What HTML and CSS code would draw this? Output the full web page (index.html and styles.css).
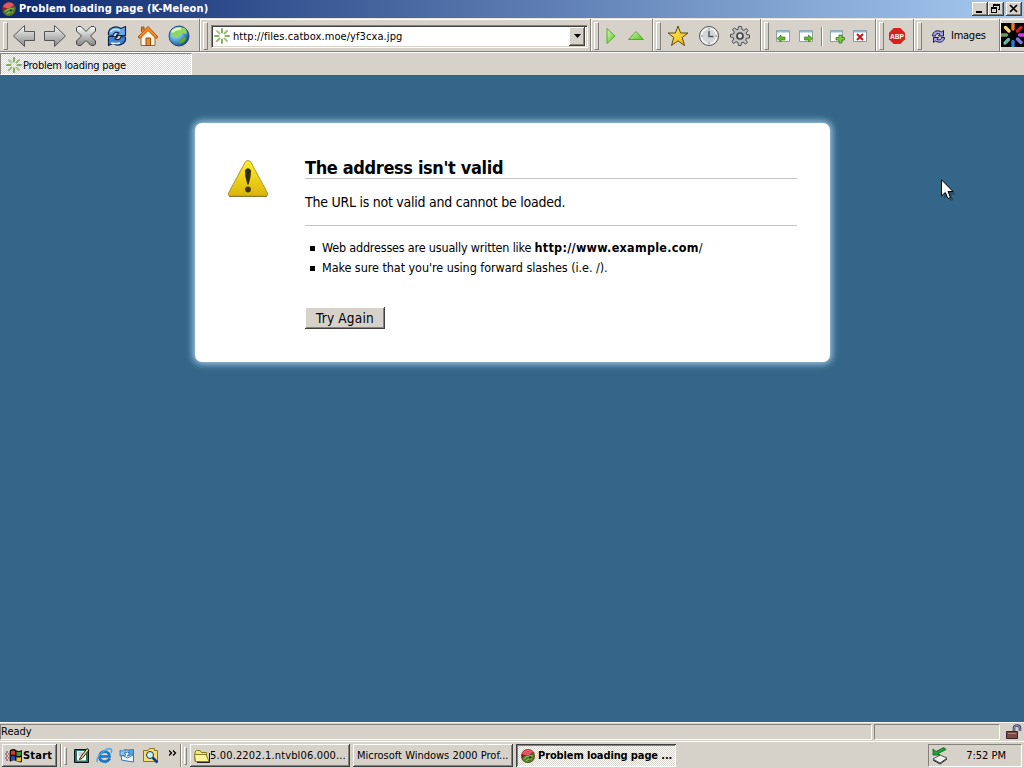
FILE: index.html
```html
<!DOCTYPE html>
<html lang="en">
<head>
    <meta charset="UTF-8">
    <title>Problem loading page</title>
    <link rel="stylesheet" href="styles.css">
</head>
<body>

    <!-- shared icons -->
    <svg class="defs" width="0" height="0">
        <defs>
            <linearGradient id="silver" x1="0" y1="0" x2="0" y2="1"><stop offset="0" stop-color="#fafafa"/><stop offset="1" stop-color="#858585"/></linearGradient>
            <linearGradient id="gold" x1="0" y1="0" x2="1" y2="1"><stop offset="0" stop-color="#fff36a"/><stop offset="1" stop-color="#f0b400"/></linearGradient>
            <linearGradient id="lime" x1="0" y1="0" x2="1" y2="1"><stop offset="0" stop-color="#d8fab4"/><stop offset="1" stop-color="#52c41c"/></linearGradient>
            <linearGradient id="warn" x1="0" y1="0" x2="0" y2="1"><stop offset="0" stop-color="#ffef28"/><stop offset="1" stop-color="#dcb40c"/></linearGradient>
            <radialGradient id="ocean" cx=".35" cy=".35" r=".75"><stop offset="0" stop-color="#c4ecff"/><stop offset=".55" stop-color="#4c9ad0"/><stop offset="1" stop-color="#123c70"/></radialGradient>
        </defs>
        <symbol id="kmeleon" viewBox="0 0 16 16">
            <circle cx="8" cy="8" r="7" fill="#8a2424"/>
            <path d="M2 6C3 1 11 0 13 4L8 8Z" fill="#e05862"/>
            <path d="M2 11C4 6 9 8 14 5C16 10 12 15 8 15C5 15 3 13 2 11Z" fill="#4c7a28"/>
            <path d="M4 11Q7 7 13 8M6 13Q9 10 12 11" stroke="#8fbd58" stroke-width="1.1" fill="none"/>
            <circle cx="10" cy="9.500" r="1" fill="#222"/>
        </symbol>
        <symbol id="spokes" viewBox="0 0 16 16">
            <g stroke-width="2" stroke-linecap="round">
                <path d="M8 1V4.500M8 11.500V15" stroke="#86ae62"/>
                <path d="M1 8H4.500M11.500 8H15" stroke="#86ae62"/>
                <path d="M3 3L5.500 5.500M10.500 10.500L13 13" stroke="#a9c58e"/>
                <path d="M13 3L10.500 5.500M5.500 10.500L3 13" stroke="#97b976"/>
            </g>
        </symbol>
        <symbol id="sync" viewBox="0 0 22 22">
            <path d="M2.500 10C1.500 3 9.500 0 15 3.500L19.500 1.500V10.500H10.500L13 8C10.500 6.500 7.500 7.500 7 10.500Z" fill="#6aa8e6" stroke="#0d2450" stroke-width="1.200" stroke-linejoin="round"/>
            <path d="M19.500 12C20.500 19 12.500 22 7 18.500L2.500 20.500V11.500H11.500L9 14C11.500 15.500 14.500 14.500 15 11.500Z" fill="#3f7fcb" stroke="#0d2450" stroke-width="1.200" stroke-linejoin="round"/>
            <path d="M4.500 7Q8 2.500 14 5.500M5 18Q10 19 14 18" stroke="#d7efff" stroke-width="1.300" fill="none"/>
        </symbol>
    </svg>

    <div class="window">
        <div class="titlebar">
            <svg width="16" height="16"><use href="#kmeleon"/></svg>
            <span class="title-text">Problem loading page (K-Meleon)</span>
            <div class="win-buttons">
                <span class="win-btn"><svg width="16" height="14" shape-rendering="crispEdges"><path d="M4 9H10V11H4Z"/></svg></span>
                <span class="win-btn"><svg width="16" height="14" shape-rendering="crispEdges"><path d="M5.500 6V2.500H11.500V7.500H10M5 3H12" fill="none" stroke="#000"/><path d="M3.500 5.500H8.500V10.500H3.500ZM3 6.500H9" fill="none" stroke="#000"/></svg></span>
                <span class="win-btn close"><svg width="16" height="14"><path d="M4 3L11 10M11 3L4 10" stroke="#000" stroke-width="1.700"/></svg></span>
            </div>
        </div>

        <div class="toolbar">
            <div class="group nav">
                <svg width="24" height="24" viewBox="0 0 24 24"><path d="M1.500 12L12.500 1.500V7.500H22.500V16.500H12.500V22.500Z" fill="url(#silver)" stroke="#555"/></svg>
                <svg width="24" height="24" viewBox="0 0 24 24"><path d="M22.500 12L11.500 1.500V7.500H1.500V16.500H11.500V22.500Z" fill="url(#silver)" stroke="#555"/></svg>
                <svg width="24" height="24" viewBox="0 0 24 24"><path d="M4 2.500H7L12 7.500L17 2.500H20L21.500 4V7L16.500 12L21.500 17V20L20 21.500H17L12 16.500L7 21.500H4L2.500 20V17L7.500 12L2.500 7V4Z" fill="url(#silver)" stroke="#444"/></svg>
                <svg width="24" height="24" viewBox="-1 -1 24 24"><use href="#sync" width="22" height="22"/></svg>
                <svg width="24" height="24" viewBox="0 0 24 24"><path d="M5 11V21.500H19V11L12 5Z" fill="#fff6e6" stroke="#a8601c"/><path d="M5.500 8V3H8V6" fill="#f07818" stroke="#a04c08"/><path d="M2 13L12 2.500L22 13L20 14.500L12 6.500L4 14.500Z" fill="#fb8b20" stroke="#b04e08"/><path d="M10 14H14.500V21.500H10Z" fill="#ec8d2d" stroke="#944810"/></svg>
                <svg width="24" height="24" viewBox="0 0 24 24"><circle cx="12" cy="12" r="10" fill="url(#ocean)" stroke="#234a78"/><path d="M4 9C6 3 14 1.500 19 5L20 10L16 9L14 12L9 13L5 12Z" fill="#8fd65e"/><path d="M13 15L19 13C19 17 16 19 12 20Z" fill="#5bac31"/><path d="M5 8Q9 4 14 5" stroke="#dcf8c4" stroke-width="2.500" fill="none"/></svg>
            </div>
            <div class="group url">
                <div class="urlbox">
                    <svg width="16" height="16"><use href="#spokes"/></svg>
                    <span class="url-text">http://files.catbox.moe/yf3cxa.jpg</span>
                    <span class="dropdown"><svg width="7" height="4"><path d="M0 0H7L3.500 4Z"/></svg></span>
                </div>
            </div>
            <div class="group go">
                <svg width="16" height="18" viewBox="0 0 16 18"><path d="M4 1.500L12 9L4 16.500Z" fill="url(#lime)" stroke="#58a832"/></svg>
                <svg width="18" height="18" viewBox="0 0 18 18"><path d="M1.500 12.500L9 4.500L16.500 12.500Z" fill="url(#lime)" stroke="#58a832"/></svg>
            </div>
            <div class="group tools">
                <svg width="24" height="24" viewBox="0 0 24 24"><path d="M12 2L14.600 9H22L16.200 13.500L18.500 21.500L12 16.800L5.500 21.500L7.800 13.500L2 9H9.400Z" fill="url(#gold)" stroke="#5c4810" stroke-linejoin="round"/></svg>
                <svg width="24" height="24" viewBox="0 0 24 24"><circle cx="12" cy="12" r="9.500" fill="#e8e8e8" stroke="#555"/><circle cx="12" cy="12" r="7.500" fill="#d3d5d8" stroke="#fff"/><path d="M12 7V12.500H16.500" fill="none" stroke="#55595f" stroke-width="1.500"/><path d="M12 4V5.500M12 18.500V20M4 12H5.500M18.500 12H20" stroke="#666"/></svg>
                <svg width="24" height="24" viewBox="0 0 24 24"><path d="M10.500 2.500H13.500L14 5.500L16 6.300L18.500 4.500L20 6.500L18 9L18.700 10.500L21.500 11V14L18.500 14.200L17.700 16L19.500 18.500L17.500 20L15 18.200L13.500 18.700L13 21.500H10.500L10 18.500L8 17.700L5.500 19.500L4 17.500L5.800 15L5.200 13.500L2.500 13V10.500L5.500 10L6.300 8L4.500 5.500L6.500 4L9 5.800L10.200 5.200Z" fill="#c4c4c4" stroke="#4c4c4c"/><circle cx="12" cy="12" r="3" fill="#e2deda" stroke="#444" stroke-width="1.700"/></svg>
            </div>
            <div class="group tabs-group">
                <svg width="16" height="16" viewBox="0 0 16 16"><path d="M1.500 2.500H14.500V13.500H1.500Z" fill="#fff" stroke="#8fa29c"/><path d="M2 3.500H14" stroke="#8eb8d8" stroke-width="2"/><path d="M2 10.500L6 7V9H10V12H6V14Z" fill="#65b732" stroke="#3c7a18" stroke-width=".7"/></svg>
                <svg width="16" height="16" viewBox="0 0 16 16"><path d="M1.500 2.500H14.500V13.500H1.500Z" fill="#fff" stroke="#8fa29c"/><path d="M2 3.500H14" stroke="#8eb8d8" stroke-width="2"/><path d="M14.500 10.500L10.500 7V9H6.500V12H10.500V14Z" fill="#65b732" stroke="#3c7a18" stroke-width=".7"/></svg>
                <i class="sep"></i>
                <svg width="16" height="16" viewBox="0 0 16 16"><path d="M1.500 2.500H13.500V13.500H1.500Z" fill="#fff" stroke="#8fa29c"/><path d="M2 3.500H13" stroke="#8eb8d8" stroke-width="2"/><path d="M10 7H13V9.500H15.500V12H13V15H10V12H7V9.500H10Z" fill="#79c942" stroke="#3c7a18" stroke-width=".8"/></svg>
                <svg width="16" height="16" viewBox="0 0 16 16"><path d="M1.500 2.500H14.500V13.500H1.500Z" fill="#fff" stroke="#8a9696"/><path d="M2 3.500H14" stroke="#8eb8d8" stroke-width="2"/><path d="M5 6L11 12M11 6L5 12" stroke="#c01818" stroke-width="2"/></svg>
            </div>
            <div class="group abp">
                <svg width="16" height="16" viewBox="0 0 16 16"><path d="M4.700 0H11.300L16 4.700V11.300L11.300 16H4.700L0 11.300V4.700Z" fill="#d8201c"/><text x="8" y="10.600" class="abp-text" textLength="14" lengthAdjust="spacingAndGlyphs">ABP</text></svg>
            </div>
            <div class="group images">
                <svg width="15" height="15" viewBox="0 0 15 15"><g fill="#a7a4e8" stroke="#1b1b4c"><path d="M1.500 7C1.500 2 7 .5 10.500 3L12.500 1.500V7H7.500L9 5C6 4 4.500 5 4.500 7Z"/><path d="M13.500 8.500C13.500 13 8 14.500 4.500 12L2.500 13.500V8.500H7.500L6 10.500C8.500 11.500 10.500 10.500 10.500 8.500Z"/></g></svg>
                <span class="images-text">Images</span>
            </div>
            <div class="throbber">
                <svg width="24" height="24" viewBox="0 0 24 24">
                    <g stroke-width="3.400" stroke-linecap="round">
                        <path d="M12 1V6" stroke="#f07820"/><path d="M20 4.500L16.500 8" stroke="#c81c2c"/><path d="M18.500 12H24" stroke="#d63be8"/><path d="M16.500 16L20 19.500" stroke="#8478e0"/>
                        <path d="M12 18.500V23" stroke="#2878d8"/><path d="M7.500 16.500L4 20" stroke="#68b8a8"/><path d="M1 12H5.500" stroke="#6c9c58"/><path d="M4.500 4.500L8 8" stroke="#f4d878"/>
                    </g>
                </svg>
            </div>
        </div>

        <div class="tabbar">
            <div class="tab"><svg width="16" height="16"><use href="#spokes"/></svg><span class="tab-text">Problem loading page</span></div>
        </div>

        <div class="page">
            <div class="card">
                <svg width="42" height="40" viewBox="0 0 42 40">
                    <path d="M21 1.500Q23 1.500 24 3.500L40.500 34Q41.500 37 38.500 37H3.500Q.5 37 1.500 34L18 3.500Q19 1.500 21 1.500Z" fill="url(#warn)" stroke="#b39824"/>
                    <path d="M2 37.500H40" stroke="#8e7a36"/>
                    <path d="M18 11.500Q21 7 24 11.500Q24.200 18 21.600 25.500H20.400Q17.800 18 18 11.500Z" fill="#302a08"/>
                    <circle cx="21" cy="30.500" r="2.900" fill="#403608"/>
                </svg>
                <div class="message">
                    <h1>The address isn't valid</h1>
                    <p class="short">The URL is not valid and cannot be loaded.</p>
                    <ul>
                        <li><span class="tip-lead">Web addresses are usually written like <b>http://www.example.com</b>/</span></li>
                        <li><span class="tip">Make sure that you're using forward slashes (i.e. /).</span></li>
                    </ul>
                    <button>Try Again</button>
                </div>
            </div>
        </div>

        <div class="statusbar">
            <div class="status-text">Ready</div>
            <div class="status-pane"></div>
            <svg width="18" height="16" viewBox="0 0 18 16"><path d="M9 8V4Q9 1.500 12 1.500Q15 1.500 15 4.500V7" fill="none" stroke="#33335c" stroke-width="2.600"/><path d="M9 8V4Q9 1.500 12 1.500Q15 1.500 15 4.500V7" fill="none" stroke="#a4a4cc"/><path d="M1.500 7.500H12.500V14.500H1.500Z" fill="#7c4b44" stroke="#35202c"/><path d="M3 9.500H11" stroke="#b68072"/></svg>
        </div>
    </div>

    <div class="taskbar">
        <div class="start">
            <svg width="18" height="16" viewBox="0 0 18 16"><path d="M5 2Q9 0 11 2T17 2V14Q14 15 11 13T5 14Z" fill="#111"/><path d="M6 3Q8 2 10 3V7Q8 6 6 7Z" fill="#d8362c"/><path d="M11.500 3.500Q13 4.500 16 3.500V7.500Q13 8.500 11.500 7.500Z" fill="#3f9434"/><path d="M6 8.500Q8 7.500 10 8.500V12.500Q8 11.500 6 12.500Z" fill="#3048b8"/><path d="M11.500 9Q13 10 16 9V13Q13 14 11.500 13Z" fill="#e0c430"/><path d="M1 4H5M0 6H5M1 8H5M0 10H5M1 12H5" stroke="#7c2838" stroke-dasharray="2 1"/></svg>
            <b>Start</b>
        </div>
        <i class="vline"></i><i class="grip"></i>
        <div class="quick">
            <svg width="17" height="17" viewBox="0 0 17 17"><path d="M1.500 2.500H15.500V15.500H1.500Z" fill="#27746b" stroke="#111"/><path d="M4 4H13V13.500H4Z" fill="#fff"/><path d="M5.500 6H10M5.500 8H9" stroke="#89a"/><path d="M7 11L14 1.500L16 3L9 11.500L6.500 12.500Z" fill="#f3dc6c" stroke="#222"/></svg>
            <svg width="17" height="17" viewBox="0 0 17 17"><path d="M14 11.500Q11.500 15 8 14.500Q3.500 14 3.500 9.500Q4 5 8.500 4.500Q13.500 5 13.500 9.500H4" fill="none" stroke="#1877c8" stroke-width="2.700"/><path d="M1.500 15Q-.5 12 5 6.500Q11 .5 15 2Q16.500 3 15 6" fill="none" stroke="#4aa6e4" stroke-width="1.400"/></svg>
            <svg width="17" height="17" viewBox="0 0 17 17"><path d="M2.500 8L8.500 5L14.500 8V15L8 14L2.500 13Z" fill="#eef6ff" stroke="#3476b8"/><path d="M3 8L8.500 11L14 8" fill="none" stroke="#3476b8"/><path d="M14.500 2.500V9L12.500 7Q11 9 8 9Q10.500 7 10.500 5L8.500 3Z" fill="#54a8e8" stroke="#2868a8" stroke-width=".8"/><path d="M1 9V3L3 4.500Q5 2 8 2.500Q6 4 5.500 6.500L7 8Z" fill="#8cc8f0" stroke="#2868a8" stroke-width=".8"/></svg>
            <svg width="17" height="17" viewBox="0 0 17 17"><path d="M1.500 3.500H6L7.500 1.500H12.500V3.500H15.500V14.500H1.500Z" fill="#f5df72" stroke="#897428"/><circle cx="8" cy="8" r="3.500" fill="#c3f3f6" stroke="#235"/><path d="M10.500 10.500L15.500 15.500" stroke="#123a78" stroke-width="2.500"/></svg>
        </div>
        <span class="chevron"><svg width="8" height="6"><path d="M0 .5L2.500 3L0 5.500M4 .5L6.500 3L4 5.500" fill="none" stroke="#000" stroke-width="1.300"/></svg></span>
        <i class="vline"></i><i class="grip"></i>
        <div class="tasks">
            <div class="task folder">
                <svg width="16" height="16" viewBox="0 0 16 16"><path d="M1 13.500V4L2.500 2.500H6L7.500 4.500H12.500V7" fill="#f5e478" stroke="#897a28"/><path d="M1.500 13.500L.5 6.500H12L15 13.500Z" fill="#fff49c" stroke="#897a28"/><path d="M3 14.500H15.500V5" stroke="#222" fill="none"/></svg>
                <span>5.00.2202.1.ntvbl06.000...</span>
            </div>
            <div class="task"><span>Microsoft Windows 2000 Prof...</span></div>
            <div class="task active"><svg width="16" height="16"><use href="#kmeleon"/></svg><b>Problem loading page ...</b></div>
        </div>
        <div class="tray">
            <svg width="18" height="18" viewBox="0 0 18 18"><path d="M2 12L9 8L16 11L9 16Z" fill="#eee" stroke="#555"/><path d="M2 13L9 17L16 12" fill="none" stroke="#222"/><path d="M2 2V8H9L7 6.500L15 2.500L13 .5L5 4.500Z" fill="#22a63b" stroke="#075818" stroke-width=".8"/></svg>
            <span>7:52 PM</span>
        </div>
    </div>

    <svg class="cursor" width="16" height="24" viewBox="0 0 16 24"><path d="M3 3V20L7 16.500L9.500 22L12.500 21L10 15.500H15Z" fill="#163850" opacity=".5"/><path d="M.5 .8V17L4.300 13.500L7 19.500L9.500 18.500L7 12.500H12Z" fill="#fff" stroke="#000"/></svg>

</body>
</html>
```
FILE: styles.css
```css
* {
    box-sizing: border-box;
}
body {
    margin: 0;
    width: 1024px;
    height: 768px;
    overflow: hidden;
    display: flex;
    flex-direction: column;
    font-family: "DejaVu Sans Condensed", "DejaVu Sans", sans-serif;
    font-stretch: condensed;
    font-size: 11px;
    line-height: 14px;
    color: #000;
    background: #d6d2ca;
    white-space: nowrap;
}
svg {
    flex: none;
    display: block;
}
.defs {
    position: absolute;
}
.window {
    height: 741px;
    display: flex;
    flex-direction: column;
}

/* title bar */
.titlebar {
    height: 18px;
    display: flex;
    align-items: center;
    padding: 0 2px 0 1px;
    background: linear-gradient(90deg, #0c286e, #a6caf0);
    color: #fff;
    font-weight: bold;
}
.title-text {
    margin-left: 2px;
    letter-spacing: 0.1px;
}
.win-buttons {
    margin-left: auto;
    display: flex;
}
.win-btn {
    width: 16px;
    height: 14px;
    background: #d6d2ca;
    box-shadow: inset -1px -1px #404040, inset 1px 1px #fff, inset -2px -2px #868278;
}
.win-btn.close {
    margin-left: 2px;
}

/* toolbar */
.toolbar {
    height: 34px;
    display: flex;
    border-top: 1px solid #e8e4dc;
    border-bottom: 1px solid #85827c;
    box-shadow: inset 0 1px #fff, 0 1px #fff;
}
.group {
    display: flex;
    align-items: center;
    border-right: 1px solid #85827c;
    box-shadow: 1px 0 #fff;
    margin-right: 1px;
    padding-top: 2px;
}
.group::before {
    content: "";
    width: 3px;
    height: 26px;
    margin-left: 2px;
    border: 1px solid;
    border-color: #fff #85827c #85827c #fff;
}
.nav {
    width: 200px;
    gap: 7px;
}
.nav::before {
    margin: 0 -2px 0 3px;
    position: relative;
}
.nav svg:first-of-type {
    margin-left: -1px;
}
.url {
    width: 390px;
}
.urlbox {
    width: 377px;
    height: 23px;
    margin-left: 3px;
    padding: 2px;
    display: flex;
    align-items: center;
    background: #fff;
    border: 1px solid;
    border-color: #85827c #fff #fff #85827c;
    box-shadow: inset 1px 1px #404040, inset -1px -1px #d6d2ca;
}
.url-text {
    margin-left: 3px;
    padding-top: 2px;
    letter-spacing: 0.08px;
}
.dropdown {
    width: 16px;
    height: 19px;
    margin-left: auto;
    display: flex;
    align-items: center;
    justify-content: center;
    background: #d6d2ca;
    box-shadow: inset -1px -1px #404040, inset 1px 1px #fff, inset -2px -2px #868278;
}
.go {
    width: 61px;
    gap: 8px;
}
.go::before {
    margin-right: -4px;
}
.tools {
    width: 107px;
    gap: 7px;
}
.tools::before {
    margin-right: -2px;
}
.tabs-group {
    width: 114px;
    gap: 7px;
}
.tabs-group::before {
    margin-right: -1px;
}
.sep {
    width: 1px;
    height: 19px;
    background: #85827c;
    box-shadow: 1px 0 #fff;
}
.abp {
    width: 37px;
    gap: 5px;
}
.abp-text {
    font: bold 7px "Liberation Sans", sans-serif;
    fill: #fff;
    text-anchor: middle;
}
.images {
    width: 85px;
    gap: 5px;
}
.images::before {
    margin-right: 4px;
}
.images-text {
    letter-spacing: -0.25px;
}
.throbber {
    width: 23px;
    height: 24px;
    margin-top: 4px;
    overflow: hidden;
    background: #000;
}

/* tab bar */
.tabbar {
    height: 24px;
    padding-top: 1px;
    border-bottom: 1px solid #4c5a60;
}
.tab {
    width: 192px;
    height: 22px;
    padding: 3px 5px 1px;
    display: flex;
    align-items: center;
    border: 1px solid;
    border-color: #85827c #fff #fff #85827c;
    background: repeating-conic-gradient(#fff 0 25%, #d9d6d0 0 50%) 0 0 / 2px 2px;
}
.tab-text {
    margin-left: 1px;
    padding-top: 1px;
    letter-spacing: -0.25px;
}

/* error page */
.page {
    height: 646px;
    padding: 47px 0 0 195px;
    background: #336688;
}
.card {
    width: 635px;
    height: 239px;
    padding: 36px 33px 0 32px;
    display: flex;
    background: #fff;
    border-radius: 7px;
    box-shadow: 0 0 7px 2px #a9cbe8;
}
.message {
    width: 492px;
    margin-left: 36px;
}
h1 {
    height: 20px;
    margin: 0;
    border-bottom: 1px solid #c4c4c4;
    font-size: 18px;
    line-height: 18px;
    letter-spacing: -0.36px;
}
.short {
    height: 47px;
    margin: 0;
    padding-top: 15px;
    border-bottom: 1px solid #c4c4c4;
    font-size: 14px;
    line-height: 17px;
    letter-spacing: -0.25px;
}
ul {
    margin: 12px 0 0;
    padding-left: 5px;
    list-style: none;
    font-size: 12.5px;
    line-height: 20px;
}
li {
    display: flex;
    align-items: center;
}
li::before {
    content: "";
    width: 5px;
    height: 5px;
    margin: 1px 7px 0 0;
    background: #000;
}
.tip-lead {
    letter-spacing: -0.19px;
}
.tip-lead b {
    letter-spacing: 0.27px;
}
.tip {
    letter-spacing: -0.06px;
}
button {
    width: 80px;
    height: 22px;
    margin: 29px 0 0;
    padding: 0;
    border: 0;
    background: #d6d2ca;
    box-shadow: inset -1px -1px #404040, inset 1px 1px #fff, inset -2px -2px #868278;
    font: inherit;
    font-size: 13.5px;
    line-height: 22px;
    letter-spacing: 0.2px;
}

/* status bar */
.statusbar {
    height: 19px;
    padding-top: 1px;
    display: flex;
    border-top: 1px solid #f4f2ec;
}
.status-text, .status-pane {
    height: 16px;
    border: 1px solid;
    border-color: #85827c #fff #fff #85827c;
}
.status-text {
    width: 872px;
}
.status-pane {
    width: 126px;
    margin: 0 5px 0 2px;
}

/* taskbar */
.taskbar {
    height: 27px;
    padding: 2px 2px 0;
    display: flex;
    border-top: 1px solid #fff;
}
.start {
    width: 55px;
    height: 23px;
    display: flex;
    align-items: center;
    padding-left: 3px;
    box-shadow: inset -1px -1px #404040, inset 1px 1px #fff, inset -2px -2px #868278;
}
.start b {
    letter-spacing: 0.2px;
}
.vline {
    width: 2px;
    height: 23px;
    margin-left: 3px;
    border-left: 1px solid #85827c;
    border-right: 1px solid #fff;
}
.grip {
    width: 3px;
    height: 18px;
    margin: 3px 0 0 2px;
    border: 1px solid;
    border-color: #fff #85827c #85827c #fff;
}
.quick {
    display: flex;
    gap: 6px;
    margin: 3px 0 0 6px;
}
.chevron {
    width: 18px;
    padding: 6px 0 0 10px;
}
.tasks {
    display: flex;
    gap: 3px;
    margin-left: 3px;
}
.task {
    width: 160px;
    height: 23px;
    padding: 0 4px;
    display: flex;
    align-items: center;
    overflow: hidden;
    box-shadow: inset -1px -1px #404040, inset 1px 1px #fff, inset -2px -2px #868278;
}
.task.folder span {
    letter-spacing: 0.15px;
}
.task.active {
    padding-top: 1px;
    background: repeating-conic-gradient(#fff 0 25%, #d9d6d0 0 50%) 0 0 / 2px 2px;
    box-shadow: inset 1px 1px #404040, inset -1px -1px #fff, inset 2px 2px #868278;
}
.task.active b {
    margin-left: 2px;
    letter-spacing: -0.12px;
}
.tray {
    width: 94px;
    height: 23px;
    margin-left: auto;
    padding: 0 15px 0 2px;
    display: flex;
    align-items: center;
    justify-content: space-between;
    border: 1px solid;
    border-color: #85827c #fff #fff #85827c;
}

.cursor {
    position: absolute;
    left: 941px;
    top: 179px;
}
```
